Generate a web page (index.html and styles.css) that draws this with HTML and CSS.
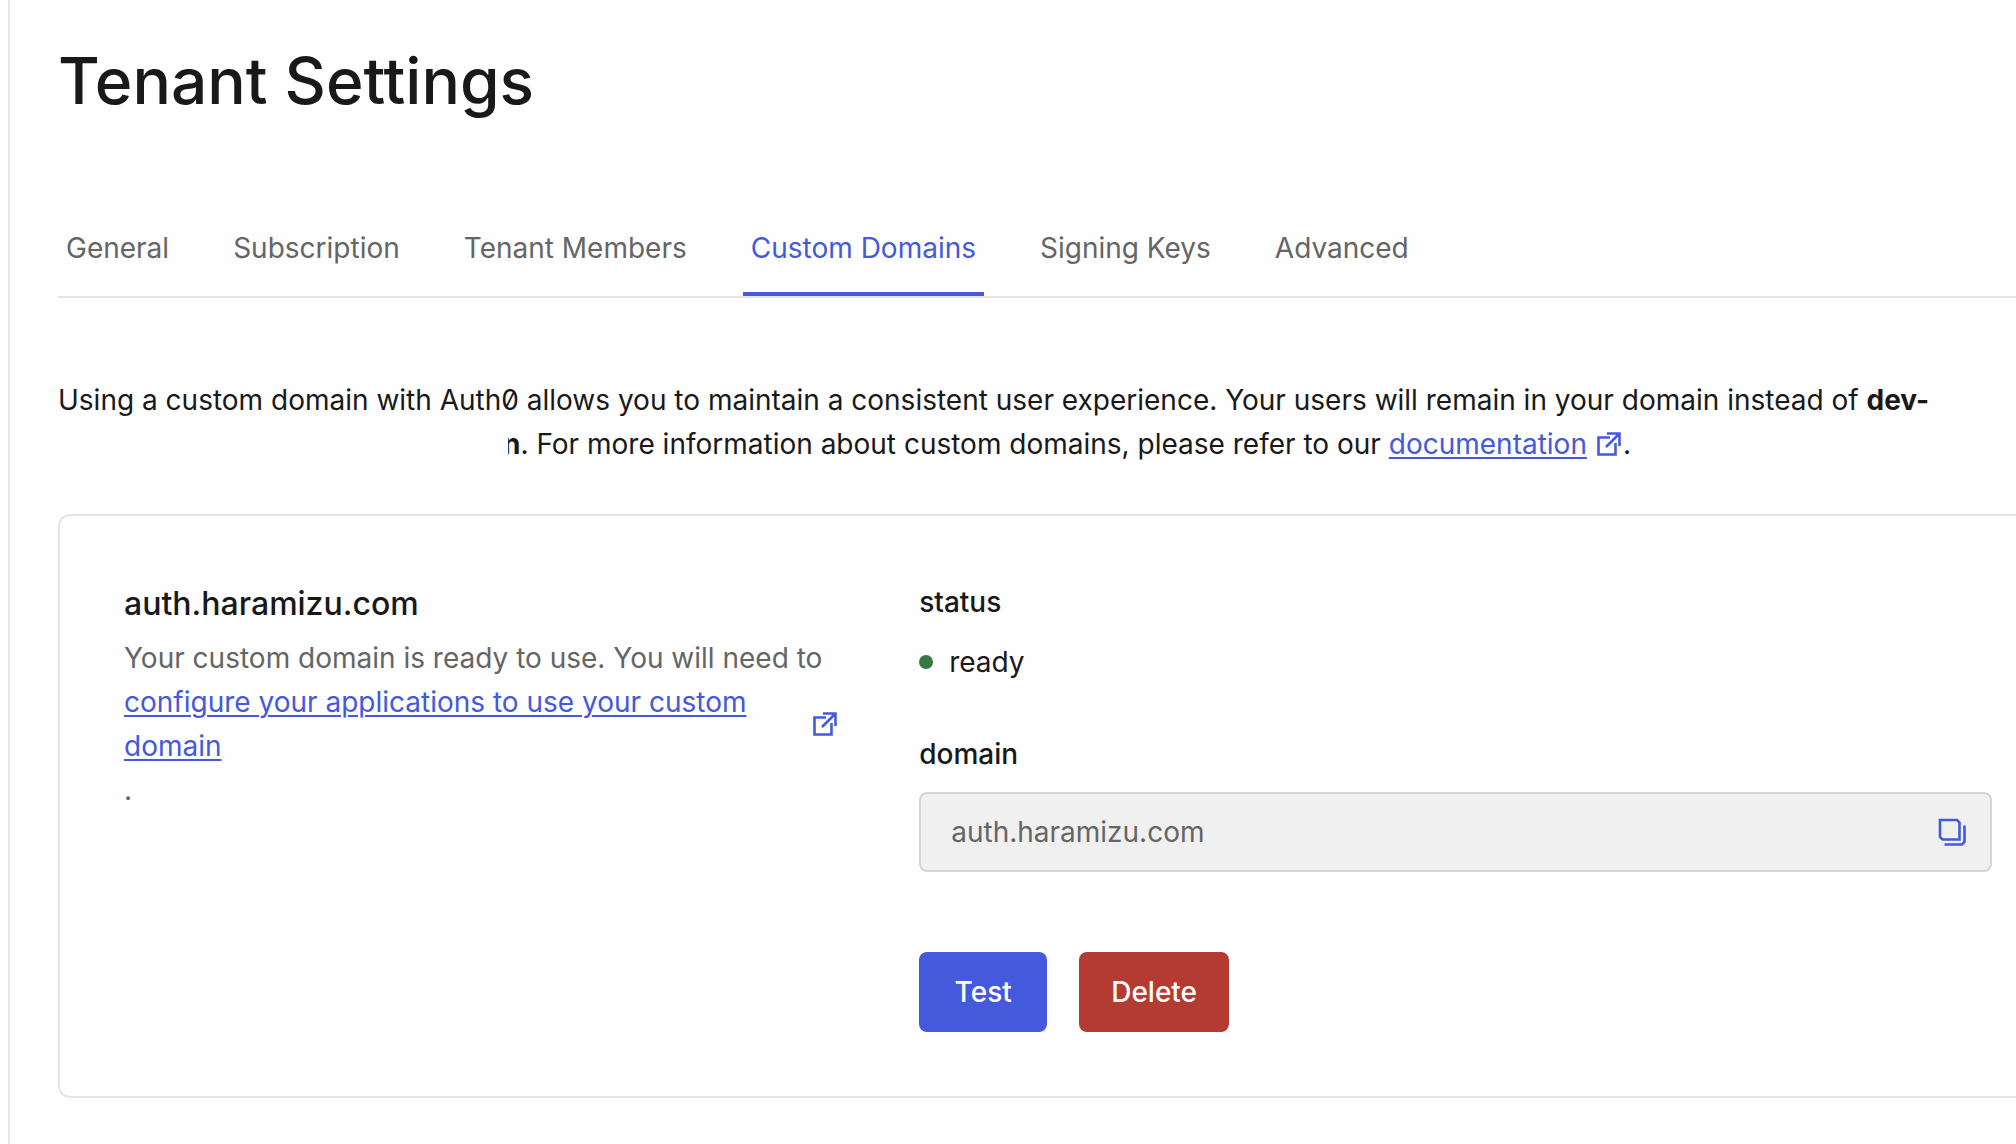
FILE: index.html
```html
<!DOCTYPE html>
<html lang="en">
<head>
<meta charset="utf-8">
<title>Tenant Settings</title>
<link rel="stylesheet" href="styles.css">
</head>
<body>
<svg class="sprite" aria-hidden="true">
  <symbol id="external" viewBox="0 0 28 28">
    <path d="M15 7.5H3.5V24.5H20.5V13M12 3.5H24.5V16M24 4L11 17" fill="none" stroke="currentColor" stroke-width="2.6"/>
  </symbol>
  <symbol id="copy" viewBox="0 0 28 28">
    <path d="M2 2H19L21.5 4.5V21.5H4.5L2 19Z" fill="none" stroke="currentColor" stroke-width="2.6"/>
    <path d="M26.5 7.5V24L24 26.5H6.5" fill="none" stroke="currentColor" stroke-width="2.6"/>
  </symbol>
</svg>
<main class="page">
  <h1 class="title">Tenant Settings</h1>
  <nav class="tabs" aria-label="Tenant settings">
    <a class="tab" href="#general">General</a>
    <a class="tab" href="#subscription">Subscription</a>
    <a class="tab" href="#members">Tenant Members</a>
    <a class="tab tab-active" href="#domains" aria-current="page">Custom Domains</a>
    <a class="tab" href="#keys">Signing Keys</a>
    <a class="tab" href="#advanced">Advanced</a>
  </nav>
  <p class="intro">Using a custom domain with Auth0 allows you to maintain a consistent user experience. Your users will remain in your domain instead of <strong>dev-<span class="redacted"></span>n</strong>. For more information about custom domains, please refer to our <a class="link" href="#docs">documentation</a><svg class="icon icon-inline" aria-hidden="true"><use href="#external"/></svg>.</p>
  <section class="card">
    <div class="summary">
      <h2 class="card-title">auth.haramizu.com</h2>
      <div class="note">Your custom domain is ready to use. You will need to
        <a class="note-link" href="#configure"><span class="link">configure your applications to use your custom domain</span><svg class="icon" aria-hidden="true"><use href="#external"/></svg></a>.</div>
    </div>
    <div class="details">
      <h3 class="label">status</h3>
      <p class="status">ready</p>
      <label class="label" for="domain">domain</label>
      <div class="field">
        <input class="field-input" id="domain" type="text" value="auth.haramizu.com" readonly>
        <button class="copy" type="button" aria-label="Copy to clipboard"><svg class="icon" aria-hidden="true"><use href="#copy"/></svg></button>
      </div>
      <div class="actions">
        <button class="button" type="button">Test</button>
        <button class="button button-danger" type="button">Delete</button>
      </div>
    </div>
  </section>
</main>
</body>
</html>
```
FILE: styles.css
```css
* {
  box-sizing: border-box;
}

body {
  margin: 0;
  background: #fefefe;
  color: #191919;
  font: 28px/44px Inter, "Liberation Sans", sans-serif;
  font-optical-sizing: none;
  font-feature-settings: "zero";
}

h1, h2, h3, p {
  margin: 0;
}

.sprite {
  position: absolute;
  width: 0;
  height: 0;
}

.page {
  min-height: 100vh;
  margin-left: 8px;
  padding: 43px 0 46px 48px;
  border-left: 2px solid #e5e5e5;
}

.title {
  font-size: 64px;
  font-weight: 500;
  line-height: 76px;
}

.tabs {
  display: flex;
  gap: 48px;
  margin-top: 89px;
  border-bottom: 2px solid #e5e5e5;
}

.tab {
  padding: 18px 8px 22px;
  border-bottom: 4px solid transparent;
  color: #656565;
  text-decoration: none;
}

.tab-active {
  border-color: #4459db;
  color: #4459db;
}

.intro {
  margin: 80px 24px 48px 0;
}

.redacted {
  display: inline-block;
  position: relative;
  width: 450px;
  height: 24px;
  margin-right: -5px;
  background: #fefefe;
}

.link {
  color: #4459db;
  text-decoration: underline;
  text-decoration-thickness: 2px;
  text-underline-offset: 3px;
}

.icon {
  flex: none;
  width: 28px;
  height: 28px;
  color: #4459db;
}

.icon-inline {
  margin-left: 8px;
  vertical-align: -4px;
}

.card {
  display: grid;
  grid-template-columns: 2fr 3fr;
  gap: 80px;
  padding: 64px 24px 64px 64px;
  border: 2px solid #e5e5e5;
  border-right: 0;
  border-radius: 12px 0 0 12px;
}

.summary {
  padding-top: 2px;
}

.card-title {
  margin-bottom: 10px;
  font-size: 32px;
  font-weight: 500;
}

.note {
  color: #656565;
}

.note-link {
  display: flex;
  align-items: center;
  gap: 8px;
  text-decoration: none;
}

.label {
  display: block;
  font-size: 28px;
  font-weight: 500;
}

.status {
  display: flex;
  align-items: center;
  gap: 16px;
  margin: 16px 0 48px;
}

.status::before {
  width: 14px;
  height: 14px;
  border-radius: 50%;
  background: #367845;
  content: "";
}

.field {
  display: flex;
  align-items: center;
  height: 80px;
  margin: 16px 0 80px;
  padding: 0 24px 0 30px;
  border: 2px solid #d5d5d5;
  border-radius: 8px;
  background: #f0f0f0;
}

.field-input {
  flex: 1;
  min-width: 0;
  padding: 0;
  border: 0;
  background: transparent;
  color: #656565;
  font: inherit;
}

.copy {
  display: flex;
  padding: 0;
  border: 0;
  background: transparent;
}

.actions {
  display: flex;
  gap: 32px;
}

.button {
  min-width: 128px;
  height: 80px;
  padding: 0 32px;
  border: 0;
  border-radius: 8px;
  background: #4459db;
  color: #fff;
  font: inherit;
  font-weight: 500;
}

.button-danger {
  background: #b33b31;
}
```
